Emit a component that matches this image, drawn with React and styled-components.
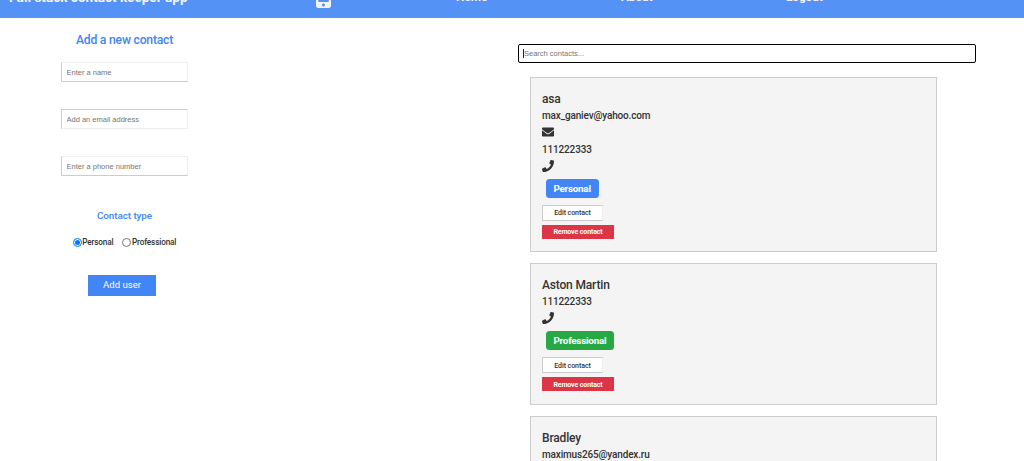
import React from "react";
import styled, { createGlobalStyle, css } from "styled-components";
import { FaEnvelope, FaPhone, FaMobileAlt } from "react-icons/fa";

const GlobalStyle = createGlobalStyle`
  * { box-sizing: border-box; }
  html, body { height: 100%; overflow: hidden; }
  body {
    margin: 0;
    background: #fff;
    color: #333;
    font-family: Roboto, "Liberation Sans", sans-serif;
  }
`;

const Page = styled.div`
  height: 461px;
  overflow: hidden;
`;

const NavBar = styled.header`
  display: grid;
  grid-template-columns: 307px 140px 165px 165px 1fr;
  height: 18px;
  padding-left: 9px;
  overflow: hidden;
  background: #5592f6;
  color: #f4f4f4;
`;

const Brand = styled.div`
  margin-top: -11px;
  font-size: 13.55px;
  font-weight: 700;
  line-height: 16px;
  white-space: nowrap;
`;

const NavLink = styled.a`
  margin-top: -11px;
  font-size: 11.7px;
  font-weight: 700;
  line-height: 16px;
`;

const NavIcon = styled.div`
  margin-top: -16.5px;
  svg { display: block; width: 15px; height: 24px; }
`;

const Main = styled.main`
  display: flex;
`;

const FormPanel = styled.form`
  display: flex;
  flex-direction: column;
  align-items: center;
  width: 249px;
  margin-right: 269px;
`;

const FormTitle = styled.h2`
  margin: 14px 0 0;
  font-size: 12.2px;
  font-weight: 500;
  line-height: 16px;
  letter-spacing: -0.22px;
  color: #4285f4;
`;

const Field = styled.input`
  width: 127px;
  height: 20px;
  margin: ${(p) => p.$top} 0 0;
  padding: 0 5px 0 4.5px;
  border: 1px solid;
  border-color: ${(p) => p.$edges};
  border-radius: 0;
  outline: none;
  background: #fff;
  font: 7.5px "Liberation Sans", Arial, sans-serif;
  &::placeholder { color: #757575; }
`;

const TypeTitle = styled.h3`
  margin: 33px 0 0;
  font-size: 9.9px;
  font-weight: 500;
  line-height: 14px;
  letter-spacing: -0.08px;
  color: #4285f4;
`;

const Choices = styled.div`
  display: flex;
  gap: 9px;
  margin-top: 14px;
`;

const Choice = styled.label`
  display: flex;
  align-items: center;
  height: 10px;
  font-size: 8.2px;
  font-weight: 500;
  line-height: 10px;
  letter-spacing: -0.14px;
`;

const Radio = styled.span`
  display: flex;
  align-items: center;
  justify-content: center;
  width: 9px;
  height: 9px;
  margin-right: 0.5px;
  border: 0.8px solid ${(p) => (p.$on ? "#0075ff" : "#767676")};
  border-radius: 50%;
  &::after {
    content: "";
    width: 5px;
    height: 5px;
    border-radius: 50%;
    background: ${(p) => (p.$on ? "#0075ff" : "transparent")};
  }
`;

const SubmitButton = styled.button`
  width: 68px;
  height: 21px;
  margin: 28px 5px 0 0;
  padding: 0 0 2px;
  border: 0;
  background: #4285f4;
  color: #fff;
  font: 9.6px Roboto, sans-serif;
`;

const ContactsPanel = styled.section`
  width: 458px;
  padding-top: 26px;
`;

const SearchBox = styled.div`
  display: flex;
  align-items: center;
  height: 19px;
  padding-left: 4px;
  border: 1px solid #000;
  border-radius: 2px;
  font: 7.5px "Liberation Sans", Arial, sans-serif;
  color: #757575;
`;

const Caret = styled.span`
  width: 1px;
  height: 9px;
  background: #222;
`;

const CardList = styled.div`
  display: flex;
  flex-direction: column;
  gap: 11px;
  width: 407px;
  margin: 14px 0 0 12px;
`;

const Card = styled.article`
  height: ${(p) => p.$height};
  padding: 13px 11px 0;
  border: 1px solid #ccc;
  background: #f4f4f4;
`;

const Name = styled.h3`
  margin: 0;
  font-size: 12px;
  font-weight: 500;
  line-height: 16px;
  letter-spacing: -0.17px;
`;

const Detail = styled.div`
  height: 17px;
  font-size: 10px;
  font-weight: 500;
  line-height: 17px;
  letter-spacing: -0.16px;
`;

const IconLine = styled.div`
  height: 16.5px;
  padding-top: 2px;
  svg { display: block; width: 12px; height: 12px; }
`;

const Badge = styled.span`
  display: block;
  width: fit-content;
  height: 19px;
  margin: 4.5px 0 0 3.5px;
  padding: 0 8px;
  border-radius: 3.5px;
  background: ${(p) => (p.$professional ? "#28a745" : "#4285f4")};
  color: #fff;
  font-size: 9.9px;
  font-weight: 700;
  line-height: 19px;
  letter-spacing: -0.26px;
`;

const buttonBase = css`
  display: block;
  padding: 1px 0 0;
  font-family: Roboto, sans-serif;
  font-size: 7px;
  letter-spacing: -0.06px;
`;

const EditButton = styled.button`
  ${buttonBase}
  width: 61px;
  height: 16px;
  margin: 7px 0 0;
  border: 1px solid;
  border-color: #ccc #eee #ccc #ccc;
  background: #fff;
  color: #333;
  font-weight: 500;
`;

const RemoveButton = styled.button`
  ${buttonBase}
  width: 72px;
  height: 14px;
  margin: 4px 0 0;
  border: 0;
  background: #dc3545;
  color: #fff;
  font-weight: 700;
  letter-spacing: -0.12px;
`;

function ContactCard({ name, email, phone, type, height }) {
  return (
    <Card $height={height}>
      <Name>{name}</Name>
      {email && (
        <>
          <Detail>{email}</Detail>
          <IconLine><FaEnvelope /></IconLine>
        </>
      )}
      <Detail>{phone}</Detail>
      <IconLine><FaPhone /></IconLine>
      <Badge $professional={type === "Professional"}>{type}</Badge>
      <EditButton>Edit contact</EditButton>
      <RemoveButton>Remove contact</RemoveButton>
    </Card>
  );
}

export default function App() {
  return (
    <Page>
      <GlobalStyle />
      <NavBar>
        <Brand>Full stack contact keeper app</Brand>
        <NavIcon><FaMobileAlt /></NavIcon>
        <NavLink>Home</NavLink>
        <NavLink>About</NavLink>
        <NavLink>Logout</NavLink>
      </NavBar>
      <Main>
        <FormPanel>
          <FormTitle>Add a new contact</FormTitle>
          <Field $top="14px" $edges="#eee #eee #ccc #ccc" placeholder="Enter a name" />
          <Field $top="27px" $edges="#ccc #eee #eee #ccc" placeholder="Add an email address" />
          <Field $top="27px" $edges="#eee #eee #ccc #ccc" placeholder="Enter a phone number" />
          <TypeTitle>Contact type</TypeTitle>
          <Choices>
            <Choice><Radio $on />Personal</Choice>
            <Choice><Radio />Professional</Choice>
          </Choices>
          <SubmitButton type="button">Add user</SubmitButton>
        </FormPanel>
        <ContactsPanel>
          <SearchBox><Caret />Search contacts...</SearchBox>
          <CardList>
            <ContactCard name="asa" email="max_ganiev@yahoo.com" phone="111222333" type="Personal" height="175px" />
            <ContactCard name="Aston Martin" phone="111222333" type="Professional" height="142px" />
            <ContactCard name="Bradley" email="maximus265@yandex.ru" phone="111222333" type="Personal" height="175px" />
          </CardList>
        </ContactsPanel>
      </Main>
    </Page>
  );
}
